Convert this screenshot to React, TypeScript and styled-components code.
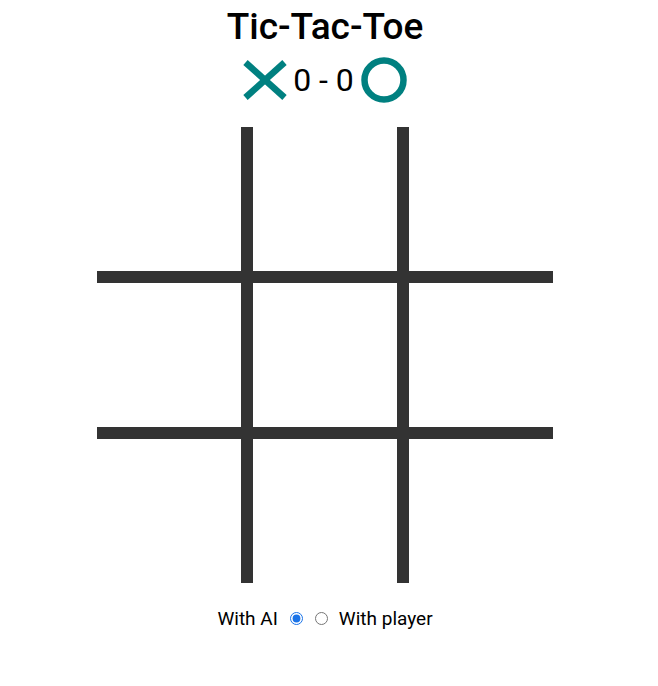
import React, { useState } from "react";
import styled, { createGlobalStyle } from "styled-components";

const GlobalStyle = createGlobalStyle`
  body {
    margin: 8px 8px 0 0;
    font-family: Roboto, "Liberation Sans", sans-serif;
    color: #000;
    background: #fff;
  }
`;

const Page = styled.div`
  width: 650px;
  display: flex;
  flex-direction: column;
  align-items: center;
`;

const Title = styled.h1`
  margin: -3px 0 8px;
  font-size: 37px;
  font-weight: 500;
  line-height: normal;
`;

const ScoreRow = styled.div`
  display: flex;
  align-items: center;
  height: 48px;
`;

const Score = styled.span`
  font-size: 32px;
  line-height: normal;
  margin: 0 7px 0 6px;
  white-space: pre;
`;

const Board = styled.div`
  margin-top: 23px;
  display: grid;
  grid-template-columns: repeat(3, 144px);
  grid-template-rows: repeat(3, 144px);
  gap: 12px;
  background: #333333;
`;

const Cell = styled.div`
  background: #ffffff;
`;

const Mode = styled.div`
  margin-top: 24px;
  display: flex;
  align-items: center;
  font-size: 19px;
  line-height: normal;
`;

const Radio = styled.input<{ $ml: number; $mr: number }>`
  width: 13px;
  height: 13px;
  margin: 0 ${(p) => p.$mr}px 0 ${(p) => p.$ml}px;
  accent-color: #1a73e8;
`;

const XIcon = () => (
  <svg width="44" height="40" viewBox="0 0 44 40">
    <line x1="2.5" y1="2.5" x2="41.5" y2="37.5" stroke="#008080" strokeWidth="6.5" />
    <line x1="41.5" y1="2.5" x2="2.5" y2="37.5" stroke="#008080" strokeWidth="6.5" />
  </svg>
);

const OIcon = () => (
  <svg width="46" height="46" viewBox="0 0 46 46">
    <circle cx="23" cy="23" r="19.5" fill="none" stroke="#008080" strokeWidth="6.5" />
  </svg>
);

export default function App() {
  const [mode, setMode] = useState("ai");
  return (
    <>
      <GlobalStyle />
      <Page>
        <Title>Tic-Tac-Toe</Title>
        <ScoreRow>
          <XIcon />
          <Score>0 - 0</Score>
          <OIcon />
        </ScoreRow>
        <Board>
          {Array.from({ length: 9 }).map((_, i) => (
            <Cell key={i} />
          ))}
        </Board>
        <Mode>
          <span>With AI</span>
          <Radio
            type="radio"
            name="mode"
            $ml={12}
            $mr={12}
            checked={mode === "ai"}
            onChange={() => setMode("ai")}
          />
          <Radio
            type="radio"
            name="mode"
            $ml={0}
            $mr={11}
            checked={mode === "player"}
            onChange={() => setMode("player")}
          />
          <span>With player</span>
        </Mode>
      </Page>
    </>
  );
}
